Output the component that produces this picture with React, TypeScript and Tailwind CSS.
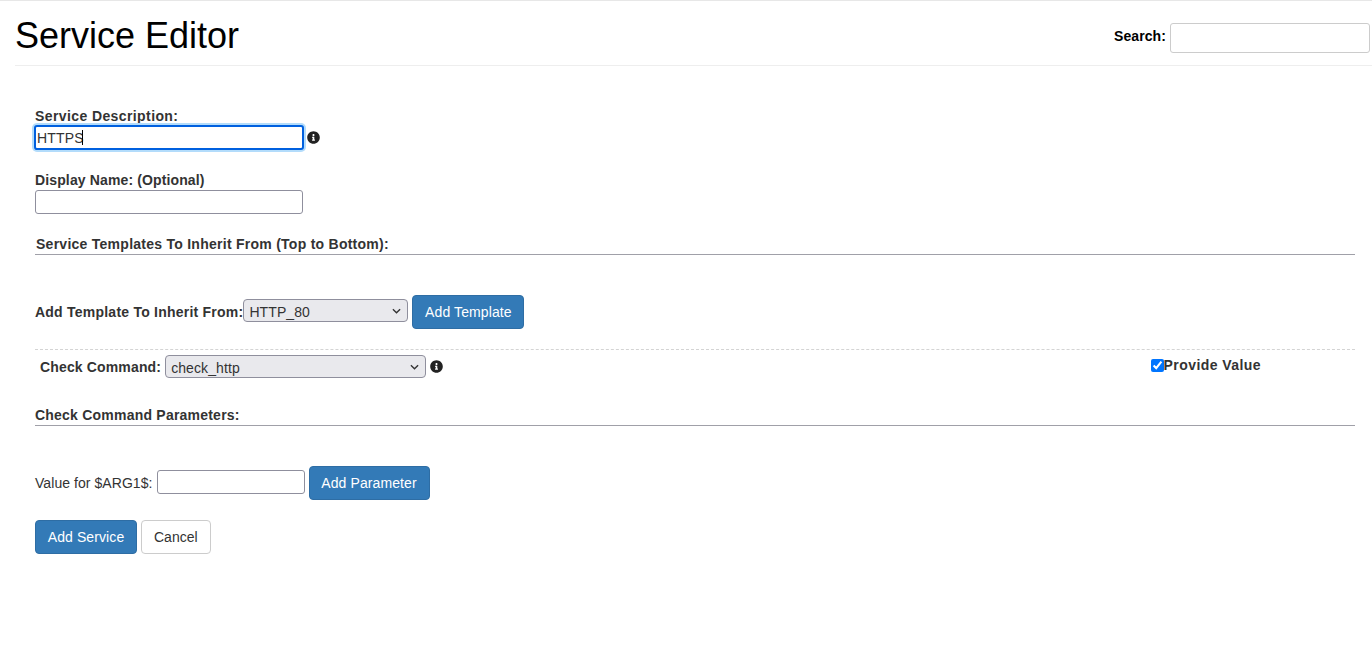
import React from "react";
import { FaInfoCircle } from "react-icons/fa";

const btn = "h-[34px] rounded-[4px] border text-[14px] leading-[20px] whitespace-nowrap";
const primary = `${btn} tracking-[0.1px] bg-[#337ab7] border-[#2e6da4] text-white`;
const label = "text-[14px] leading-[20px] font-bold text-[#333333]";
const field = "h-[24px] rounded-[3px] border border-[#8f8f9d] bg-white text-[14px] text-[#333333] px-[2px]";

function Select({ value, width, className = "" }: { value: string; width: string; className?: string }) {
  return (
    <div className={`relative ${width} ${className}`}>
      <select
        defaultValue={value}
        className="block w-full h-[23px] appearance-none rounded-[4px] border border-[#8f8f9d] bg-[#e9e9ed] text-[14px] leading-[21px] tracking-[0.1px] text-[#333333] pl-[5px] pt-[2px]"
      >
        <option>{value}</option>
      </select>
      <svg
        viewBox="0 0 10 6"
        className="absolute right-[7px] top-[9px] w-[9px] h-[6px] text-[#333333]"
        fill="none"
        stroke="currentColor"
        strokeWidth="1.5"
      >
        <path d="M1 1l4 4 4-4" />
      </svg>
    </div>
  );
}

export default function App() {
  return (
    <div className="min-h-[649px] bg-white border-t border-[#e7e7e7] font-['Liberation_Sans',Arial,sans-serif] text-[#333333]">
      <header className="ml-[15px] h-[65px] flex items-center justify-between border-b border-[#eeeeee] pr-[2px]">
        <h1 className="text-[36px] leading-[40px] font-normal text-black mt-[6px]">Service Editor</h1>
        <div className="flex items-center gap-1 mt-[9px]">
          <label className="text-[14px] font-bold text-black tracking-[0.1px] mb-[2px]">Search:</label>
          <input className="w-[200px] h-[30px] rounded-[3px] border border-[#cccccc] bg-white" />
        </div>
      </header>

      <main className="pl-[35px] pr-[17px] pt-[40px]">
        <div className={`${label} leading-[18px] tracking-[0.4px]`}>Service Description:</div>
        <div className="flex items-center mt-[-1px]">
          <div className="relative -ml-px">
            <input
              readOnly
              value="HTTPS"
              className="block w-[270px] h-[25px] rounded-[3px] border-2 border-[#0060df] ring-2 ring-[#b3dcfb] bg-white text-[14px] tracking-[0.2px] text-[#333333] pl-[1px] outline-none"
            />
            <span className="absolute left-[48px] top-[5px] h-[15px] w-px bg-black" />
          </div>
          <FaInfoCircle className="text-[#222222] w-[13px] h-[13px] ml-[3px]" />
        </div>

        <div className={`${label} leading-[18px] mt-[20px] tracking-[0.13px]`}>Display Name: (Optional)</div>
        <input className={`${field} block w-[268px]`} />

        <div className={`${label} leading-[18px] mt-[20px] border-b border-[#a0a0a8] pl-px tracking-[0.26px]`}>
          Service Templates To Inherit From (Top to Bottom):
        </div>

        <div className="flex items-center mt-[40px]">
          <span className={`${label} tracking-[0.23px]`}>Add Template To Inherit From:</span>
          <Select value="HTTP_80" width="w-[165px]" className="mb-[4px]" />
          <button className={`${primary} w-[112px] ml-[4px]`}>Add Template</button>
        </div>

        <div className="mt-[20px] border-t border-dashed border-[#d4d4d4] h-[34px] flex items-center justify-between pl-[5px] pr-[94px]">
          <div className="flex items-center gap-[4px]">
            <span className={`${label} tracking-[0.15px]`}>Check Command:</span>
            <Select value="check_http" width="w-[261px]" />
            <FaInfoCircle className="text-[#222222] w-[13px] h-[13px]" />
          </div>
          <label className={`${label} flex items-center -mt-[3px] tracking-[0.43px]`}>
            <input type="checkbox" defaultChecked className="w-[13px] h-[13px] m-0" />
            Provide Value
          </label>
        </div>

        <div className={`${label} leading-[18px] mt-[22px] border-b border-[#a0a0a8] tracking-[0.22px]`}>
          Check Command Parameters:
        </div>

        <div className="flex items-center mt-[40px]">
          <span className="text-[14px] leading-[20px] text-[#333333] tracking-[0.06px]">Value for $ARG1$:</span>
          <input className={`${field} w-[148px] ml-[4px] mb-[2px]`} />
          <button className={`${primary} w-[121px] ml-[4px]`}>Add Parameter</button>
        </div>

        <div className="flex items-center gap-[4px] mt-[20px]">
          <button className={`${primary} w-[102px]`}>Add Service</button>
          <button className={`${btn} px-3 bg-white border-[#cccccc] text-[#333333]`}>Cancel</button>
        </div>
      </main>
    </div>
  );
}
